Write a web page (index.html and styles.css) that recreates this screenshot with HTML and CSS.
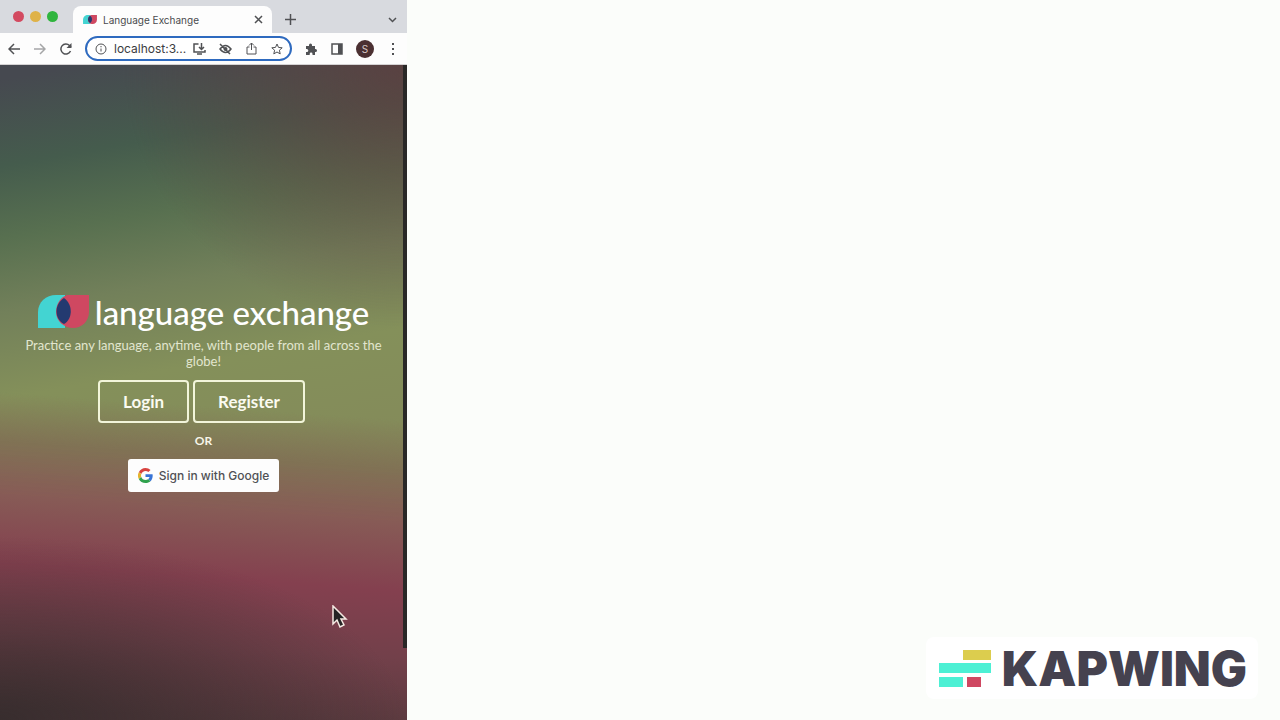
FILE: index.html
```html
<!DOCTYPE html>
<html lang="en">
<head>
<meta charset="utf-8">
<title>Language Exchange</title>
<link rel="stylesheet" href="styles.css">
</head>
<body>
<div class="stage">
  <section class="browser">
    <div class="tabstrip">
      <div class="lights"><span class="light red"></span><span class="light amber"></span><span class="light green"></span></div>
      <div class="tab">
        <svg class="favicon" viewBox="0 0 51 33" aria-hidden="true"><path d="M0 33V17C0 7 8 0 18 0H27V33Z" fill="#43d4d2"/><path d="M51 0V17C51 26 44 33 35 33C26 33 18 26 18 17C18 8 24 0 31 0Z" fill="#cf4861"/><path d="M26 3C35 9 35 24 26 29C16 24 16 9 26 3Z" fill="#233a70"/></svg>
        <span class="tab-title">Language Exchange</span>
        <button class="icon" aria-label="Close tab"><svg width="9" height="9" viewBox="0 0 9 9"><path d="M1 1l7 7M8 1l-7 7"/></svg></button>
      </div>
      <button class="icon new-tab" aria-label="New tab"><svg width="11" height="11" viewBox="0 0 11 11"><path d="M5.500 0v11M0 5.500h11"/></svg></button>
      <button class="icon tab-menu" aria-label="Search tabs"><svg width="9" height="6" viewBox="0 0 9 6"><path d="M1 1l3.500 3.500L8 1"/></svg></button>
    </div>
    <div class="toolbar">
      <button class="icon" aria-label="Back"><svg width="12" height="12" viewBox="0 0 12 12"><path d="M12 6H1M6 1L1 6l5 5"/></svg></button>
      <button class="icon faded" aria-label="Forward"><svg width="12" height="12" viewBox="0 0 12 12"><path d="M0 6h11M6 1l5 5-5 5"/></svg></button>
      <button class="icon" aria-label="Reload"><svg width="12" height="12" viewBox="0 0 12 12"><path d="M10.500 8A5 5 0 1 1 9.500 2.500L11 4"/><path class="solid" d="M11.500 0v5h-5z"/></svg></button>
      <div class="address">
        <svg width="12" height="12" viewBox="0 0 12 12" class="thin"><circle cx="6" cy="6" r="5"/><path d="M6 5.500v3M6 3v1.300"/></svg>
        <input class="url" aria-label="Address" value="localhost:3..." size="8">
        <button class="icon" aria-label="Install"><svg width="13" height="12" viewBox="0 0 13 12"><path d="M5.500 1H1v8h11V7M4 11h5M8.500 0v6M6 4l2.500 2.500L11 4"/></svg></button>
        <button class="icon" aria-label="Tracking blocked"><svg width="13" height="12" viewBox="0 0 13 12"><path d="M1 6Q6.500-1 12 6Q6.500 13 1 6zM1 1l10 10"/><circle class="solid" cx="6.500" cy="6" r="2"/></svg></button>
        <button class="icon" aria-label="Share"><svg class="thin" width="11" height="13" viewBox="0 0 11 13"><path d="M3.500 5H1v7h9V5H7.500M5.500 8V1M3 3.500L5.500 1 8 3.500"/></svg></button>
        <button class="icon" aria-label="Bookmark"><svg class="thin" width="12" height="12" viewBox="0 0 12 12"><path d="M6 1l1.500 3.400 3.700.4-2.800 2.400.8 3.700L6 9l-3.200 1.900.8-3.700L.8 4.800l3.700-.4z"/></svg></button>
      </div>
      <button class="icon" aria-label="Extensions"><svg width="12" height="12" viewBox="0 0 12 12"><path class="solid" d="M1 3h3V2a1.500 1.500 0 0 1 3 0v1h3v3h.5a1.500 1.500 0 0 1 0 3H10v3H7.500v-1a1.400 1.400 0 0 0-2.800 0v1H1V9h.8a1.500 1.500 0 0 0 0-3H1z"/></svg></button>
      <button class="icon" aria-label="Side panel"><svg width="12" height="12" viewBox="0 0 12 12"><path d="M1 1h10v10H1z"/><path class="solid" d="M7 1h4v10H7z"/></svg></button>
      <button class="avatar" aria-label="Profile">S</button>
      <button class="icon" aria-label="Menu"><svg width="4" height="12" viewBox="0 0 4 12"><path class="solid" d="M1 0h2v2H1zM1 5h2v2H1zM1 10h2v2H1z"/></svg></button>
    </div>
    <main class="page">
      <div class="hero">
        <h1 class="brand">
          <svg class="logo" viewBox="0 0 51 33" aria-hidden="true"><path d="M0 33V17C0 7 8 0 18 0H27V33Z" fill="#43d4d2"/><path d="M51 0V17C51 26 44 33 35 33C26 33 18 26 18 17C18 8 24 0 31 0Z" fill="#cf4861"/><path d="M26 3C35 9 35 24 26 29C16 24 16 9 26 3Z" fill="#233a70"/></svg>
          <span>language exchange</span>
        </h1>
        <p class="tagline">Practice any language, anytime, with people from all across the globe!</p>
        <div class="actions"><button class="action">Login</button><button class="action">Register</button></div>
        <p class="or">OR</p>
        <button class="google">
          <svg width="15" height="15" viewBox="0 0 48 48" aria-hidden="true"><path fill="#d8433f" d="M24 9.500c3.500 0 6.700 1.200 9.200 3.600l6.900-6.900C35.900 2.400 30.500 0 24 0 14.600 0 6.500 5.400 2.600 13.200l8 6.200C12.400 13.700 17.700 9.500 24 9.500z"/><path fill="#3974d6" d="M47 24.600c0-1.600-.2-3.100-.4-4.600H24v9h12.900c-.6 3-2.300 5.500-4.800 7.200l7.700 6C44.400 38 47 31.800 47 24.600z"/><path fill="#e5b32d" d="M10.500 28.600a14.500 14.500 0 0 1 0-9.200l-8-6.200a24 24 0 0 0 0 21.600z"/><path fill="#30a24d" d="M24 48c6.500 0 11.900-2.100 15.900-5.800l-7.700-6c-2.200 1.500-4.900 2.300-8.200 2.300-6.300 0-11.600-4.200-13.500-9.900l-8 6.200C6.500 42.600 14.600 48 24 48z"/></svg>
          <span>Sign in with Google</span>
        </button>
      </div>
      <div class="scroll-thumb"></div>
      <svg class="pointer" width="16" height="24" viewBox="0 0 16 24" aria-hidden="true"><path d="M1 1v18l4-4 3 7 4-2-3-6h5z" fill="#242424" stroke="#f5e9e2" stroke-width="1.500"/></svg>
    </main>
  </section>
  <div class="watermark">
    <svg width="53" height="37" viewBox="0 0 53 37" aria-hidden="true"><path fill="#dccd4e" d="M24 0h28v10H24z"/><path fill="#4df0d4" d="M0 13h52v10H0zM0 27h24v10H0z"/><path fill="#cf4861" d="M28 27h14v10H28z"/></svg>
    <span>KAPWING</span>
  </div>
</div>
</body>
</html>
```
FILE: styles.css
```css
* { box-sizing: border-box; }
body { margin: 0; background: #fbfdfa; font-family: Lato, sans-serif; }
button { font-family: inherit; margin: 0; cursor: pointer; }
.stage { display: flex; justify-content: space-between; min-height: 100vh; }
.browser { display: flex; flex-direction: column; width: 31.8%; min-width: 400px; }

.tabstrip { display: flex; align-items: center; height: 33px; padding-left: 13px; padding-right: 10px; background: #d8dadf; }
.lights { display: flex; gap: 6px; width: 60px; }
.light { width: 11px; height: 11px; border-radius: 50%; }
.red { background: #d34a60; }
.amber { background: #dfb248; }
.green { background: #30b53e; }
.tab { display: flex; align-items: center; align-self: flex-end; width: 199px; height: 27px; padding: 0 9px 0 10px; border-radius: 8px 8px 0 0; background: #fdfdfd; }
.favicon { width: 14px; height: 9px; margin-right: 6px; }
.tab-title { flex: 1; font: 10px Inter, sans-serif; color: #4a4b4e; }
.new-tab { margin-left: 13px; margin-top: 6px; }
.tab-menu { margin-left: auto; margin-top: 6px; }

.icon { display: flex; align-items: center; justify-content: center; padding: 0; border: 0; background: none; }
.icon svg, .address > svg { fill: none; stroke: #505154; stroke-width: 1.5; flex: none; }
.icon .thin, .address > .thin { stroke-width: 1; }
.icon .solid { fill: #505154; stroke: none; }
.faded { opacity: 0.5; }

.toolbar { display: flex; align-items: center; gap: 12px; height: 32px; padding: 0 7px; background: #fdfdfd; border-bottom: 1px solid #d5d3d4; }
.toolbar .icon { flex: none; width: 14px; }
.address { display: flex; align-items: center; flex: 1; min-width: 0; height: 25px; padding: 0 6px 0 8px; border: 2px solid #2e6abf; border-radius: 13px; background: #fff; }
.address .icon + .icon { margin-left: 12px; }
.url { flex: 1; min-width: 0; margin-left: 7px; padding: 0; border: 0; outline: 0; background: none; font: 12px Inter, sans-serif; color: #3b3c3f; }
.avatar { flex: none; width: 18px; height: 18px; padding: 0; border: 0; border-radius: 50%; background: #4b3032; color: #d8c9c9; font: 10px Inter, sans-serif; }

.page {
  position: relative; display: flex; flex: 1; align-items: center; justify-content: center; color: #fff;
  background:
    radial-gradient(ellipse 70% 40% at 100% 0%, rgba(98, 56, 60, 0.7), transparent),
    radial-gradient(ellipse 100% 28% at 0% 100%, rgba(48, 42, 42, 0.8), transparent),
    linear-gradient(184deg, transparent 52%, rgba(128, 112, 84, 0.9) 59%, #875b56 67%, #84404f 77%, #72404a 87%, #57393d 98%),
    linear-gradient(170deg, #464950 2%, #455c4d 14%, #587050 24%, #72805a 34%, #84905a 46%, #848b5a 60%);
}
.hero { display: flex; flex-direction: column; align-items: center; padding: 0 20px; }
.brand { display: flex; align-items: center; gap: 6px; margin: 0; font-size: 33px; line-height: 36px; font-weight: 500; white-space: nowrap; }
.logo { width: 51px; height: 33px; }
.tagline { margin: 7px 0 11px; font-size: 13px; line-height: 16px; text-align: center; color: #e2e6cf; }
.actions { display: flex; gap: 4px; margin-right: 4px; }
.action { height: 43px; padding: 0 23px; border: 2px solid #f2f5da; border-radius: 4px; background: none; color: #fbfbf1; font-size: 17px; font-weight: 700; }
.or { margin: 9px 0; font-size: 12px; line-height: 18px; font-weight: 700; color: #f7f5e9; }
.google { display: flex; align-items: center; gap: 6px; height: 33px; padding: 0 10px; border: 0; border-radius: 3px; background: #fdfdfd; color: #505155; font: 500 12px Inter, sans-serif; }
.scroll-thumb { position: absolute; top: 0; right: 0; width: 4px; height: 89%; background: #292827; }
.pointer { position: absolute; left: 81.5%; top: 82.5%; }

.watermark { display: flex; align-items: center; align-self: flex-end; gap: 10px; height: 62px; margin: 0 22px 21px 0; padding: 0 11px 0 13px; border-radius: 8px; background: #fff; color: #45424f; font: 900 48px Inter, sans-serif; }
```
